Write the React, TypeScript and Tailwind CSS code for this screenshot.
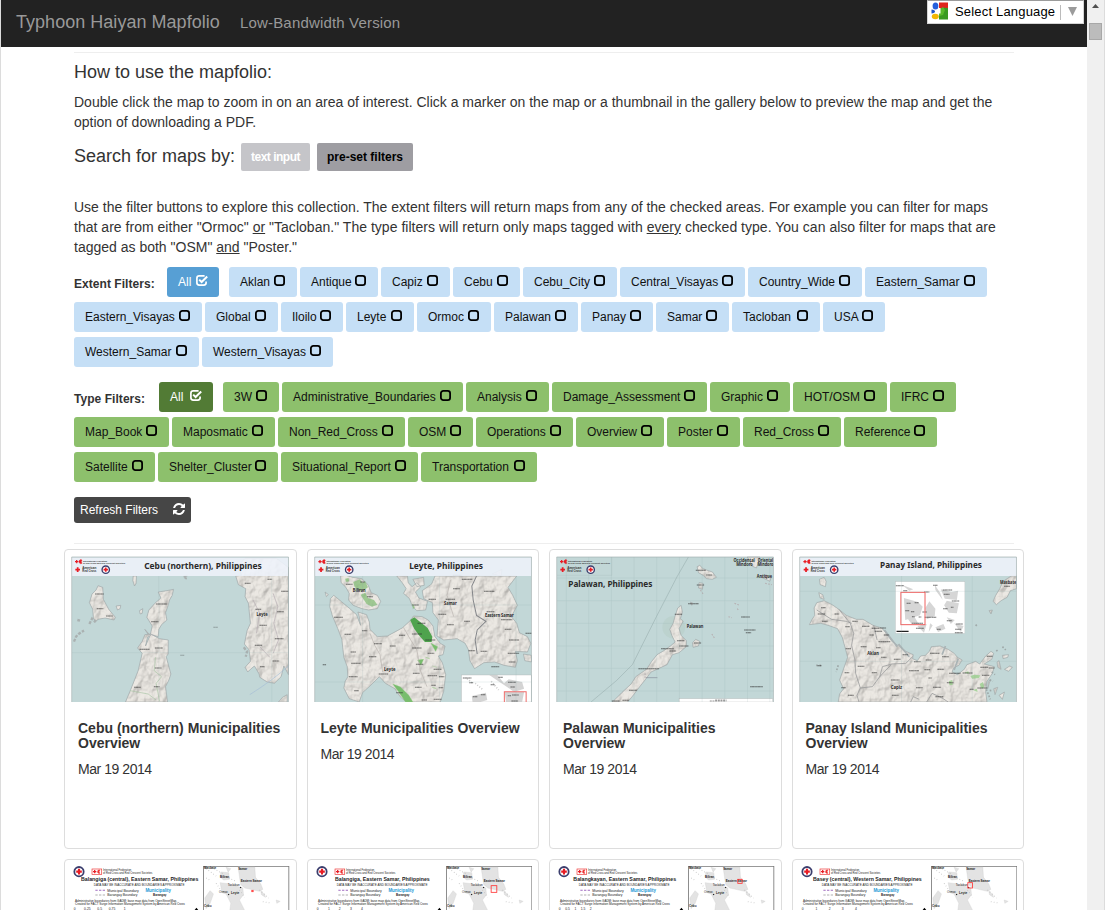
import React from 'react';

type Filter = { name: string; w: string };

const extentRows: Filter[][] = [
  [
    { name: 'Aklan', w: 'w-[68px]' },
    { name: 'Antique', w: 'w-[78px]' },
    { name: 'Capiz', w: 'w-[69px]' },
    { name: 'Cebu', w: 'w-[67px]' },
    { name: 'Cebu_City', w: 'w-[94px]' },
    { name: 'Central_Visayas', w: 'w-[125px]' },
    { name: 'Country_Wide', w: 'w-[114px]' },
    { name: 'Eastern_Samar', w: 'w-[122px]' },
  ],
  [
    { name: 'Eastern_Visayas', w: 'w-[128px]' },
    { name: 'Global', w: 'w-[73px]' },
    { name: 'Iloilo', w: 'w-[62px]' },
    { name: 'Leyte', w: 'w-[68px]' },
    { name: 'Ormoc', w: 'w-[74px]' },
    { name: 'Palawan', w: 'w-[84px]' },
    { name: 'Panay', w: 'w-[72px]' },
    { name: 'Samar', w: 'w-[73px]' },
    { name: 'Tacloban', w: 'w-[88px]' },
    { name: 'USA', w: 'w-[62px]' },
  ],
  [
    { name: 'Western_Samar', w: 'w-[125px]' },
    { name: 'Western_Visayas', w: 'w-[131px]' },
  ],
];

const typeRows: Filter[][] = [
  [
    { name: '3W', w: 'w-[56px]' },
    { name: 'Administrative_Boundaries', w: 'w-[181px]' },
    { name: 'Analysis', w: 'w-[83px]' },
    { name: 'Damage_Assessment', w: 'w-[155px]' },
    { name: 'Graphic', w: 'w-[80px]' },
    { name: 'HOT/OSM', w: 'w-[94px]' },
    { name: 'IFRC', w: 'w-[66px]' },
  ],
  [
    { name: 'Map_Book', w: 'w-[95px]' },
    { name: 'Maposmatic', w: 'w-[103px]' },
    { name: 'Non_Red_Cross', w: 'w-[127px]' },
    { name: 'OSM', w: 'w-[65px]' },
    { name: 'Operations', w: 'w-[97px]' },
    { name: 'Overview', w: 'w-[88px]' },
    { name: 'Poster', w: 'w-[73px]' },
    { name: 'Red_Cross', w: 'w-[98px]' },
    { name: 'Reference', w: 'w-[93px]' },
  ],
  [
    { name: 'Satellite', w: 'w-[81px]' },
    { name: 'Shelter_Cluster', w: 'w-[120px]' },
    { name: 'Situational_Report', w: 'w-[137px]' },
    { name: 'Transportation', w: 'w-[116px]' },
  ],
];

function BoxIcon() {
  return (
    <svg className="-mt-[3px] h-[11px] w-[11px] shrink-0" viewBox="0 0 11 11">
      <rect x="0.900" y="0.900" width="9.200" height="9.200" rx="2.400" fill="none" stroke="#000" strokeWidth="1.800" />
    </svg>
  );
}

function CheckIcon() {
  return (
    <svg className="-mt-[3px] h-[11px] w-[12px] shrink-0" viewBox="0 0 12 11" fill="none" stroke="#fff">
      <path d="M8.600 .9H3.200Q.9 .9 .9 3.200v4.600Q.9 10.100 3.200 10.100h4.600Q10.100 10.100 10.100 7.800V6.600" strokeWidth="1.700" />
      <path d="M3.200 4.600 5.600 7 11.200 1.500" strokeWidth="2" />
    </svg>
  );
}

function RefreshIcon() {
  return (
    <svg className="-mt-[3px] h-[12px] w-[12px]" viewBox="0 0 1536 1536" fill="#fff">
      <path d="M1511 928q0 5-1 7-64 268-268 434.500t-478 166.500q-146 0-282.500-55t-243.500-157l-129 129q-19 19-45 19t-45-19-19-45v-448q0-26 19-45t45-19h448q26 0 45 19t19 45-19 45l-137 137q71 66 161 102t187 36q134 0 250-65t186-179q11-17 53-117 8-23 30-23h192q13 0 22.500 9.500t9.500 22.500zm25-800v448q0 26-19 45t-45 19h-448q-26 0-45-19t-19-45 19-45l138-138q-148-137-349-137-134 0-250 65t-186 179q-11 17-53 117-8 23-30 23h-199q-13 0-22.500-9.500t-9.500-22.500v-7q65-268 270-434.500t480-166.500q146 0 284 55.500t245 156.500l130-129q19-19 45-19t45 19 19 45z" />
    </svg>
  );
}

function FilterButton({ f, tone }: { f: Filter; tone: string }) {
  return (
    <button className={`flex h-[30px] items-center justify-between rounded-[3px] pl-[11px] pr-[12px] text-[12px] text-[#111] ${f.w} ${tone}`}>
      <span className="whitespace-nowrap">{f.name}</span>
      <BoxIcon />
    </button>
  );
}

function FilterGroup({ label, labelW, all, tone, rows }: { label: string; labelW: string; all: string; tone: string; rows: Filter[][] }) {
  return (
    <div className="flex flex-col gap-[5px]">
      {rows.map((row, i) => (
        <div key={i} className="flex items-center gap-[3px]">
          {i === 0 && (
            <>
              <span className={`mt-[4px] whitespace-nowrap text-[12px] font-bold tracking-[0.05px] ${labelW}`}>{label}</span>
              <button className={`mr-[7px] flex h-[30px] items-center justify-between rounded-[3px] px-[11px] text-[12px] text-white ${all}`}>
                <span>All</span>
                <CheckIcon />
              </button>
            </>
          )}
          {row.map((f) => (
            <FilterButton key={f.name} f={f} tone={tone} />
          ))}
        </div>
      ))}
    </div>
  );
}

/* ---------- map thumbnails ---------- */

function Defs({ id }: { id: string }) {
  return (
    <defs>
      <filter id={`${id}-relief`} x="0" y="0" width="100%" height="100%">
        <feTurbulence type="fractalNoise" baseFrequency="0.035 0.028" numOctaves="4" seed="7" result="n" />
        <feDiffuseLighting in="n" surfaceScale="14" lightingColor="#fff" result="l">
          <feDistantLight azimuth="225" elevation="56" />
        </feDiffuseLighting>
        <feComposite in="l" in2="SourceGraphic" operator="arithmetic" k1="0.5" k2="0" k3="0.6" k4="0" result="m" />
        <feComposite in="m" in2="SourceGraphic" operator="in" />
      </filter>
    </defs>
  );
}

function Land({ id, d }: { id: string; d: string }) {
  return (
    <>
      <path d={d} fill="#e2dfda" filter={`url(#${id}-relief)`} />
      <path d={d} fill="none" stroke="#a3a9aa" strokeWidth="2" />
    </>
  );
}

function Marks({ pts }: { pts: number[][] }) {
  return (
    <g stroke="#303030" strokeWidth="3.200" strokeDasharray="5 .6 7 .6 4 .6" opacity=".68">
      {pts.map(([x, y, w], i) => (
        <path key={i} d={`M${x - w / 2} ${y}h${w}`} />
      ))}
    </g>
  );
}

function Label({ x, y, s, w, children }: { x: number; y: number; s: number; w?: number; children: React.ReactNode }) {
  return (
    <text x={x} y={y} fontSize={s} fontWeight="bold" textAnchor="middle" textLength={w} lengthAdjust="spacingAndGlyphs" fill="#2a2a2a" fontFamily="Noto Sans, sans-serif">
      {children}
    </text>
  );
}

function Cross({ x, y, r }: { x: number; y: number; r: number }) {
  return <path d={`M${x - r} ${y}h${2 * r}M${x} ${y - r}v${2 * r}`} stroke="#e81c24" strokeWidth={r * 0.75} />;
}

function Emblem({ x, y, r }: { x: number; y: number; r: number }) {
  return (
    <>
      <circle cx={x} cy={y} r={r} fill="#fff" stroke="#3c3f6e" strokeWidth={r * 0.38} />
      <Cross x={x} y={y} r={r * 0.6} />
    </>
  );
}

function Logos({ x }: { x: number }) {
  return (
    <g transform={`translate(${x} 0)`} fontFamily="Liberation Sans, sans-serif" fill="#333">
      <Cross x={17} y={65} r={5} />
      <path d="M33 60a6 6 0 1 0 0 10a8 8 0 0 1 0-10" fill="#e81c24" stroke="#e81c24" />
      <text x="36" y="65" fontSize="7" fontWeight="bold" textLength="72" lengthAdjust="spacingAndGlyphs">International Federation</text>
      <text x="36" y="72" fontSize="7" fontWeight="bold" textLength="126" lengthAdjust="spacingAndGlyphs">of Red Cross and Red Crescent Societies</text>
      <Cross x={20} y={89} r={7} />
      <text x="34" y="88" fontSize="8" fontWeight="bold" textLength="42" lengthAdjust="spacingAndGlyphs">American</text>
      <text x="34" y="95" fontSize="8" fontWeight="bold" textLength="42" lengthAdjust="spacingAndGlyphs">Red Cross</text>
      <Emblem x={104} y={89} r={11} />
    </g>
  );
}

function Frame({ x, w, grid, children }: { x: number; w: number; grid: React.ReactNode; children: React.ReactNode }) {
  return (
    <svg className="h-[146px] w-full" viewBox={`${x} 48 ${w} 438`} preserveAspectRatio="none">
      <rect x={x} y="48" width={w} height="438" fill="#fff" />
      <rect x={x + 3} y="51" width={w - 7} height="435" fill="#c2d7d7" />
      {children}
      {grid}
      <path d={`M${x + 2} 486V51H${x + w - 3}V486`} fill="none" stroke="#a2b0b0" strokeWidth="2" />
    </svg>
  );
}

function Banner({ x, w }: { x: number; w: number }) {
  return <rect x={x + 3} y="52" width={w - 7} height="56" fill="#eef3fa" opacity=".88" />;
}

function CebuMap() {
  return (
    <Frame x={35} w={654} grid={<path d="M298 108V486M636 108V486M38 338H686" stroke="#8eabab" strokeWidth="1" opacity=".45" />}>
      <Defs id="cebu" />
      <Land id="cebu" d="M116 137L130 142 132 178 148 208 168 232 164 240 137 234 116 238 108 246 102 234 100 208 90 188 98 162 110 150ZM221 108H231L230 130 225 138 220 122ZM296 156L322 152 342 148 338 166 330 180 324 202 318 218 322 240 306 254 298 268 296 290 276 284 264 292 258 318 270 290 256 268 272 286 278 258 262 232 268 210 286 190 304 174ZM256 284L274 282 300 296 326 300 326 342 320 350 334 402 328 420 318 440 324 486H198L214 448 236 392 248 340 234 324 248 304ZM528 108L545 106 538 74 556 55H650L686 82V404L672 378 664 410 644 430 622 426 600 412 598 402 584 378 572 388 564 396 556 382 572 364 568 330 554 312 562 272 572 250 566 190 556 170 558 146 536 134ZM656 486L668 472 682 464V486ZM170 198L184 196 182 206 174 210ZM240 212L250 206 248 220 242 222Z" />
      <path d="M44 305L50 290 58 282 66 276 74 272M90 252L98 236 106 244 110 236M54 240L62 242M552 322L562 334 558 350M372 110L380 108 378 118" fill="none" stroke="#aab1b1" strokeWidth="7" strokeDasharray="9 4" />
      <path d="M288 352L284 392 306 410 290 430 300 484M212 452L266 462 290 480" stroke="#abc5a6" fill="none" strokeWidth="2" />
      <path d="M570 464Q640 420 688 376" stroke="#a6bed6" fill="none" strokeWidth="2" />
      <path d="M640 160L654 200 642 250 656 300 640 340M580 180L600 220 590 280M600 320L630 352" stroke="#b6aeb4" fill="none" strokeWidth="2" />
      <Marks pts={[[120, 162, 26], [122, 206, 20], [150, 228, 20], [306, 192, 34], [286, 245, 22], [255, 328, 30], [298, 324, 24], [296, 384, 20], [234, 442, 20], [292, 440, 18], [564, 130, 18], [630, 118, 14], [596, 208, 18], [662, 215, 20], [610, 256, 22], [658, 296, 26], [596, 316, 22], [648, 363, 20], [608, 380, 14], [675, 154, 22]]} />
      <g opacity=".5">
        <Marks pts={[[468, 262, 14], [368, 346, 12]]} />
      </g>
      <Label x={607} y={229} s={14} w={34}>Leyte</Label>
      <Banner x={35} w={654} />
      <Logos x={35} />
      <Label x={430} y={86} s={24} w={352}>Cebu (northern), Philippines</Label>
    </Frame>
  );
}

function LeyteMap() {
  return (
    <Frame x={43} w={652} grid={<path d="M188 108V486M418 108V486M646 108V486M46 195H692M46 426H692" stroke="#8eabab" opacity=".5" />}>
      <Defs id="leyte" />
      <Land id="leyte" d="M122 108L138 106 158 112 186 116 204 134 214 158 232 166 242 184 232 206 206 210 186 206 160 196 146 180 148 160 138 142 124 128ZM92 176L102 166 124 184 150 206 170 224 182 256 178 230 174 216 200 224 208 246 210 268 232 290 262 288 284 276 306 264 330 242 340 228 366 230 384 240 398 258 404 290 420 310 434 318 428 344 414 348 426 368 436 404 430 454 420 486H318L300 470 284 446 256 430 238 410 210 438 188 458 178 486 148 476 132 444 136 424 144 410 142 380 132 352 126 298 114 266 98 228 90 200ZM290 108L322 108 324 128 336 140 350 128 362 140 346 156 356 174 382 184 376 210 350 212 336 198 328 176 310 160 318 146 306 128ZM404 108H648L622 142 636 166 650 196 632 230 648 250 656 278 680 290 690 310 680 336 644 334 650 362 644 382 610 376 582 366 550 368 522 386 508 362 504 330 494 310 470 296 430 300 410 288 414 240 398 218 396 188 370 176 366 152 394 132ZM574 102L604 88 602 108ZM668 342L692 346V366L672 362ZM338 118L370 112 372 136 350 140ZM76 156L86 164 80 170Z" />
      <path d="M160 126L180 118 188 128 196 124 204 142 190 152 176 152 164 140ZM182 164L196 158 204 174 222 180 232 194 216 200 200 192ZM136 116L146 114 148 124 138 126ZM336 190L344 202 338 208Z" fill="#86bd78" opacity=".75" />
      <path d="M330 240L342 232 360 246 382 264 396 290 394 306 374 306 358 288 342 266Z" fill="#4fa34d" />
      <path d="M392 310L412 320 406 334ZM278 432L300 440 326 466 338 486H316L296 456ZM352 360L370 358 362 376ZM376 352L388 356ZM396 442L408 446ZM396 378l14 4" fill="#79bd6e" stroke="#8fc97f" />
      <path d="M528 108L514 138 518 180 528 226 556 244 530 270 524 300 530 342" fill="none" stroke="#84868a" strokeWidth="3" />
      <path d="M210 280L224 316 240 344 248 396M310 262L328 294 350 330 360 390 380 440M450 120L440 166 460 230" stroke="#b9b3ae" fill="none" strokeWidth="2" />
      <Marks pts={[[148, 133, 20], [210, 170, 18], [188, 126, 14], [116, 232, 26], [144, 283, 20], [160, 336, 16], [168, 370, 28], [160, 410, 26], [218, 350, 22], [194, 272, 16], [234, 311, 24], [278, 318, 18], [306, 286, 18], [350, 282, 30], [350, 324, 28], [390, 300, 30], [364, 250, 24], [358, 373, 22], [412, 388, 24], [348, 400, 20], [396, 407, 28], [424, 410, 16], [400, 436, 14], [422, 443, 14], [354, 442, 20], [298, 458, 20], [170, 452, 14], [392, 340, 20], [372, 480, 16], [412, 478, 24], [470, 106, 26], [500, 118, 32], [468, 146, 20], [450, 178, 28], [396, 178, 22], [426, 223, 24], [450, 254, 20], [566, 154, 32], [570, 215, 24], [618, 239, 34], [500, 244, 18], [622, 268, 20], [640, 300, 30], [514, 332, 20], [550, 334, 20], [638, 340, 34], [634, 366, 20], [584, 380, 24], [684, 280, 20], [346, 195, 20], [250, 402, 28], [74, 374, 10]]} />
      <Label x={178} y={156} s={14} w={38}>Biliran</Label>
      <Label x={450} y={195} s={14} w={38}>Samar</Label>
      <Label x={596} y={230} s={14} w={86}>Eastern Samar</Label>
      <Label x={269} y={393} s={14} w={34}>Leyte</Label>
      <rect x="483" y="405" width="208" height="81" fill="#fff" stroke="#aaa" />
      <path d="M514 468L556 458 560 480 540 486H516ZM566 405H590L610 430 624 418 664 426 670 446 640 456 618 440 600 428ZM612 456H670L664 486H616Z" fill="#c9c9c9" opacity=".8" />
      <path d="M524 430L546 448M572 424L594 450M500 416L516 430" stroke="#ccc" strokeWidth="5" strokeDasharray="3 5" />
      <Marks pts={[[500, 414, 26], [512, 428, 12], [576, 434, 12], [634, 427, 24], [636, 441, 14], [600, 412, 14], [548, 464, 14], [524, 470, 14], [644, 465, 20], [626, 467, 10], [642, 483, 20]]} />
      <path d="M611 486V455H676V486" fill="none" stroke="#ee6a68" strokeWidth="3" />
      <Banner x={43} w={652} />
      <Logos x={44} />
      <Label x={437} y={87} s={24} w={220}>Leyte, Philippines</Label>
    </Frame>
  );
}

function PalawanMap() {
  return (
    <Frame x={39} w={655} grid={<path d="M70 51V486M137 51V486M205 51V486M273 51V486M341 51V486M409 51V486M477 51V486M545 51V486M613 51V486M680 51V486M42 114H692M42 182H692M42 250H692M42 318H692M42 385H692M42 453H692" stroke="#8faaaa" opacity=".48" />}>
      <Defs id="pal" />
      <circle cx="392" cy="262" r="34" fill="#b7cfc8" opacity=".6" />
      <path d="M42 106H206V51" fill="none" stroke="#a9bdbd" />
      <Land id="pal" d="M208 486L236 458 264 432 278 410 310 388 326 364 342 344 362 332 382 318 396 306 386 286 380 268 390 250 396 228 404 204 414 196 418 216 412 236 420 244 408 266 414 286 430 302 430 320 408 338 388 344 372 374 346 386 324 396 306 420 290 440 272 464 254 486ZM462 80L470 76 480 86 490 90 508 96 520 112 508 118 490 116 480 106 466 98ZM468 128L480 130 478 148 466 144ZM448 308L458 298 470 304 466 318 450 322ZM442 186L450 190 446 196ZM612 51H650L640 84 626 78 620 62ZM654 112L668 104 684 112 680 124 668 118Z" />
      <path d="M436 51L402 110 340 230 268 374 220 422 144 486" fill="none" stroke="#93a8a8" strokeWidth="1.500" />
      <path d="M574 190L590 196M582 206l6 6M506 282l8 12M556 230l10 3M666 130l20 4M472 150l8 12M306 400v18" stroke="#b5aeb0" strokeWidth="3" strokeDasharray="5 4" />
      <Marks pts={[[473, 91, 30], [498, 105, 18], [472, 135, 22], [451, 191, 32], [406, 223, 22], [413, 302, 22], [373, 326, 38], [389, 333, 20], [422, 318, 28], [463, 309, 22], [317, 386, 62], [270, 451, 24], [218, 483, 24], [248, 481, 20], [607, 231, 26], [620, 270, 34], [616, 278, 16], [640, 440, 38]]} />
      <path d="M309 413h34" stroke="#778" strokeWidth="1.500" />
      <Label x={456} y={265} s={13} w={50}>Palawan</Label>
      <Label x={603} y={66} s={13} w={64}>Occidental</Label>
      <Label x={604} y={79} s={13} w={50}>Mindoro</Label>
      <Label x={667} y={66} s={13} w={46}>Oriental</Label>
      <Label x={667} y={79} s={13} w={48}>Mindoro</Label>
      <Label x={664} y={114} s={13} w={46}>Antique</Label>
      <rect x="408" y="476" width="281" height="10" fill="#fff" stroke="#aaa" />
      <path d="M500 483h50M516 480h34" stroke="#999" strokeWidth="3" strokeDasharray="6 2" />
      <Logos x={39} />
      <Label x={202} y={140} s={24} w={252}>Palawan, Philippines</Label>
    </Frame>
  );
}

function PanayMap() {
  return (
    <Frame x={43} w={652} grid={<path d="M139 108V486M349 108V486M560 108V486M46 154H692M46 364H692" stroke="#8eabab" opacity=".5" />}>
      <Defs id="panay" />
      <Land id="panay" d="M74 254L82 238 90 226 88 204 96 188 118 182 142 194 162 208 184 226 214 238 234 238 264 256 290 264 308 286 320 304 344 320 362 334 384 344 382 356 396 362 406 348 420 346 432 334 438 320 464 318 488 328 506 340 516 352 530 360 520 376 504 384 500 396 516 404 536 388 544 374 570 364 582 372 600 348 616 334 624 340 618 358 596 372 626 380 620 400 604 424 600 456 604 486H160L164 462 176 446 164 420 174 392 188 352 182 328 172 292 158 266 130 256 108 250ZM104 118L118 112 124 124 122 140 106 134ZM102 158L114 164 118 178 106 174ZM642 146L652 124 676 108H692V146L674 152 664 172 646 182 632 194 622 184 630 166ZM610 212L620 210 616 222ZM650 346L668 344 666 352 652 356ZM656 388L672 378 680 382 668 394ZM634 366L640 362 646 388 636 382ZM624 446L636 442 628 464ZM640 466L656 456 650 478ZM608 424L614 418 606 446Z" />
      <path d="M618 396L628 404M612 420L622 424M612 452L622 450M650 320L660 330M632 330l6 8M602 448l12 30M570 254l4 4M160 376l-6 20M94 376h20" stroke="#9fa9a9" strokeWidth="5" strokeDasharray="5 5" />
      <path d="M470 344L480 318M518 356L506 390M340 312L372 350M298 270L336 320" stroke="#aab3b5" fill="none" strokeWidth="5" />
      <path d="M554 408L566 404 584 406 580 414 560 416ZM582 432L592 426 596 442 588 446ZM562 450L574 446 576 456ZM490 424L500 420 502 434 492 436ZM536 398L548 394 552 402Z" fill="#9bcf8f" opacity=".8" />
      <path d="M162 208L196 250 206 280 200 316 210 360 212 400 226 444 262 440 284 410 292 380 320 372 362 370 382 350M226 444L216 466 222 486M318 374L284 410M376 486L384 470 402 478M424 486L440 460 470 474 488 486M96 210L140 238 184 244 200 250M266 256L276 300" fill="none" stroke="#949698" strokeWidth="2.200" />
      <Marks pts={[[116, 203, 14], [110, 222, 22], [120, 244, 16], [156, 222, 14], [188, 260, 14], [210, 244, 16], [242, 259, 22], [190, 326, 16], [236, 320, 18], [228, 379, 20], [186, 398, 14], [176, 443, 14], [198, 466, 18], [272, 265, 24], [294, 264, 18], [280, 274, 22], [304, 285, 16], [260, 285, 14], [298, 305, 36], [280, 323, 14], [296, 352, 16], [360, 344, 16], [336, 358, 20], [268, 398, 16], [396, 365, 20], [430, 360, 18], [448, 340, 28], [480, 350, 20], [386, 392, 30], [330, 420, 26], [426, 389, 18], [466, 388, 20], [402, 443, 20], [508, 400, 34], [455, 442, 24], [494, 428, 20], [546, 399, 30], [596, 382, 24], [600, 406, 22], [590, 444, 30], [558, 448, 12], [330, 466, 20], [462, 470, 24], [618, 384, 18], [612, 349, 18], [434, 414, 10], [104, 377, 12], [664, 139, 18]]} />
      <Label x={264} y={345} s={14} w={34}>Aklan</Label>
      <Label x={334} y={446} s={14} w={34}>Capiz</Label>
      <rect x="331" y="125" width="207" height="155" fill="#fff" stroke="#bbb" />
      <path d="M356 174L398 186 412 200 404 226 360 240ZM360 226L384 224 400 252 376 248ZM420 204L432 184 450 206 448 228 424 238ZM466 148L498 156 518 152 514 180 478 176ZM484 182L520 190 514 220 490 218 476 196ZM448 134L464 158 472 180 450 150ZM396 258L424 252 416 278ZM434 250L442 256 430 276ZM450 262L474 252 480 266 458 276ZM484 232L508 240 496 252ZM506 250L534 258 526 276ZM350 134L384 148 372 152Z" fill="#d6d6d6" />
      <Marks pts={[[344, 137, 24], [360, 152, 12], [450, 136, 14], [486, 150, 28], [484, 163, 18], [510, 183, 22], [424, 156, 16], [370, 190, 12], [394, 188, 12], [366, 212, 12], [382, 215, 10], [384, 230, 8], [404, 231, 8], [396, 250, 34], [404, 265, 24], [446, 232, 14], [480, 206, 14], [492, 242, 16], [522, 252, 20], [518, 268, 18], [520, 278, 24], [460, 268, 12], [418, 216, 14], [428, 232, 20], [500, 202, 8]]} />
      <path d="M334 274h36" stroke="#222" strokeWidth="4" />
      <rect x="347" y="157" width="72" height="97" fill="none" stroke="#ee6361" strokeWidth="3" />
      <Label x={667} y={132} s={13} w={49}>Masbate</Label>
      <Banner x={43} w={652} />
      <Logos x={44} />
      <Label x={437} y={85} s={24} w={304}>Panay Island, Philippines</Label>
    </Frame>
  );
}

type Sheet = { title: string; tx: number; tw: number; box: [number, number, number, number]; ticks: [number, string][] };

const sheets: Sheet[] = [
  { title: 'Balangiga (central), Eastern Samar, Philippines', tx: 65, tw: 352, box: [577, 121, 4, 4], ticks: [[46, '0'], [84, '0.25'], [121, '0.5'], [158, '0.75'], [196, '1']] },
  { title: 'Balangiga, Eastern Samar, Philippines', tx: 98, tw: 284, box: [566, 107, 17, 20], ticks: [[46, '0'], [80, '1'], [112, '2'], [146, '3'], [179, '4']] },
  { title: 'Balangkayan, Eastern Samar, Philippines', tx: 87, tw: 308, box: [580, 88, 13, 12], ticks: [[46, '0'], [70, '0.5'], [93, '1'], [116, '1.5'], [139, '2']] },
  { title: 'Basey (central), Western Samar, Philippines', tx: 77, tw: 326, box: [541, 98, 14, 16], ticks: [[46, '0'], [87, '1'], [127, '2'], [166, '3'], [206, '4']] },
];

function SheetText({ x, y, s, w, bold, fill, children }: { x: number; y: number; s: number; w: number; bold?: boolean; fill?: string; children: React.ReactNode }) {
  return (
    <text x={x} y={y} fontSize={s} fontWeight={bold ? 'bold' : 'normal'} fill={fill} textLength={w} lengthAdjust="spacingAndGlyphs">
      {children}
    </text>
  );
}

function SheetThumb({ s }: { s: Sheet }) {
  return (
    <svg className="h-[146px] w-full" viewBox="35 48 655 438" preserveAspectRatio="none" fontFamily="Liberation Sans, sans-serif" fill="#222">
      <Emblem x={59} y={65} r={14} />
      <rect x="98" y="57" width="29" height="16" fill="#fff" stroke="#e33" strokeWidth="2" />
      <Cross x={106} y={65} r={5} />
      <path d="M122 60a5.500 5.500 0 1 0 0 10a7 7 0 0 1 0-10" fill="#e33" stroke="#e33" />
      <SheetText x={131} y={64} s={8.500} w={85}>International Federation</SheetText>
      <SheetText x={131} y={73} s={8.500} w={148}>of Red Cross and Red Crescent Societies</SheetText>
      <SheetText x={s.tx} y={94} s={16} w={s.tw} bold>{s.title}</SheetText>
      <SheetText x={103} y={108} s={9.500} w={272}>DATA MAY BE INACCURATE AND BOUNDARIES APPROXIMATE</SheetText>
      <path d="M108 121h29" stroke="#a06cc0" strokeWidth="3" strokeDasharray="7 4" />
      <path d="M108 135h29" stroke="#888" strokeWidth="2" strokeDasharray="7 4" />
      <SheetText x={144} y={125} s={11} w={94}>Municipal Boundary</SheetText>
      <SheetText x={144} y={138} s={11} w={90}>Barangay Boundary</SheetText>
      <SheetText x={258} y={126} s={14} w={77} bold fill="#1c9ad6">Municipality</SheetText>
      <SheetText x={281} y={137} s={9.500} w={40} bold>Barangay</SheetText>
      <SheetText x={47} y={155} s={10} w={306}>Administrative boundaries from GADM; base map data from OpenStreetMap.</SheetText>
      <SheetText x={47} y={166} s={10} w={329}>Created for FACT Surge Information Management System by American Red Cross</SheetText>
      {s.ticks.map(([x, t]) => (
        <text key={t} x={x} y="180" fontSize="10" textAnchor="middle">{t}</text>
      ))}
      <path d="M404 182L411 173 418 182Z" fill="#000" />
      <rect x="432" y="49" width="256" height="300" fill="#fff" stroke="#777" strokeWidth="2.500" />
      <path d="M536 51H586L588 82 604 102 610 118 600 124 574 118 556 114 544 104 540 80ZM484 66L508 68 510 88 492 90 482 80ZM482 98L512 102 530 108 550 114 552 134 540 150 560 190H510L514 160 500 132 488 128ZM436 144L452 122 462 132 452 160 440 176ZM434 52H444L440 56ZM604 122L616 134 618 142 606 134ZM650 150L662 154 652 160ZM500 52L514 56 506 66Z" fill="#e3e3e3" stroke="#ccc" />
      <path d="M440 56L470 78M456 52L492 72M500 80L530 94M540 120L556 142M600 120L628 144M610 155l22 4M470 100l14 20M440 84l10 6" stroke="#bbb" strokeWidth="3" strokeDasharray="2 7" fill="none" />
      <SheetText x={434} y={58} s={9} w={36} bold>Masbate</SheetText>
      <SheetText x={536} y={61} s={9} w={27} bold>Samar</SheetText>
      <SheetText x={482} y={85} s={9} w={27} bold>Biliran</SheetText>
      <SheetText x={544} y={96} s={9} w={63} bold>Eastern Samar</SheetText>
      <SheetText x={515} y={133} s={9} w={24} bold>Leyte</SheetText>
      <SheetText x={434} y={171} s={9} w={22} bold>Cebu</SheetText>
      <SheetText x={505} y={107} s={8} w={36}>Tacloban</SheetText>
      <SheetText x={479} y={129} s={8} w={27}>Ormoc</SheetText>
      <path d="M542 111l3 3M506 132l3 3" stroke="#000" strokeWidth="3" />
      <rect x={s.box[0]} y={s.box[1]} width={s.box[2]} height={s.box[3]} fill="none" stroke="#f33" strokeWidth="2.500" />
    </svg>
  );
}

const cards = [
  { title: 'Cebu (northern) Municipalities Overview', map: <CebuMap /> },
  { title: 'Leyte Municipalities Overview', map: <LeyteMap /> },
  { title: 'Palawan Municipalities Overview', map: <PalawanMap /> },
  { title: 'Panay Island Municipalities Overview', map: <PanayMap /> },
];

function Card({ children }: { children: React.ReactNode }) {
  return <article className="h-[300px] overflow-hidden rounded-[4px] border border-[#ddd] bg-white px-[6px] pt-[6px]">{children}</article>;
}

function LanguagePicker() {
  return (
    <div className="mr-[3px] flex h-6 w-[157px] items-center border border-[#d5d5d5] border-t-[#9b9b9b] bg-white pl-[3px] text-[13px] text-black">
      <svg className="-mt-[2px] h-[18px] w-[17px]" viewBox="0 0 17 18">
        <rect x="8" y="0.500" width="9" height="6.500" fill="#e0251c" />
        <path d="M8 7q4-2 9-1v11.500H8z" fill="#3a9a22" />
        <path d="M8 8l4-3 2 3-2 5-4 1z" fill="#59b92c" />
        <path d="M6.500 6h3v5.500h-3z" fill="#fff" />
        <ellipse cx="4.500" cy="4" rx="2.900" ry="3.500" fill="#245edb" />
        <path d="M.5 7.500Q4 8 4 9.500T.5 11.500z" fill="#1f55c8" />
        <ellipse cx="4.300" cy="14.500" rx="3.500" ry="2.800" fill="#f2b705" />
      </svg>
      <span className="-mt-px ml-[7px] w-[101px] whitespace-nowrap tracking-[0.18px]">Select Language</span>
      <span className="ml-[4px] h-[15px] w-px bg-[#bbb]" />
      <svg className="-mt-px ml-[7px] h-[9px] w-[9px]" viewBox="0 0 9 9">
        <path d="M0 0h9L4.500 9z" fill="#9b9b9b" />
      </svg>
    </div>
  );
}

export default function App() {
  return (
    <div className="flex h-[910px] w-[1105px] overflow-hidden bg-white text-[14px] leading-5 text-[#333]" style={{ fontFamily: '"Liberation Sans", Arial, sans-serif' }}>
      <div className="w-[1087px] shrink-0 border-l border-[#dcdcdc]">
        <nav className="flex h-[47px] items-start bg-[#222] text-[#999]">
          <span className="ml-[15px] mt-[12px] w-[204px] whitespace-nowrap text-[18px] tracking-[0.03px]">Typhoon Haiyan Mapfolio</span>
          <span className="ml-[20px] mt-[13px] flex-1 text-[15px] tracking-[0.17px]">Low-Bandwidth Version</span>
          <LanguagePicker />
        </nav>
        <main className="ml-[73px] w-[940px]">
          <hr className="mt-[5px] border-[#eee]" />
          <h4 className="mt-[9px] text-[18px]">How to use the mapfolio:</h4>
          <p className="mt-[10px]">
            Double click the map to zoom in on an area of interest. Click a marker on the map or a thumbnail in the gallery below to preview the map and get the
            <br />
            option of downloading a PDF.
          </p>
          <div className="mt-[11px] flex h-[28px] items-center">
            <h4 className="-mt-[3px] w-[167px] whitespace-nowrap text-[18px]">Search for maps by:</h4>
            <button className="h-[28px] w-[69px] rounded-[2px] bg-[#c5c5c9] text-[12px] font-bold tracking-[-0.5px] text-white">text input</button>
            <button className="ml-[7px] h-[28px] w-[96px] rounded-[2px] bg-[#9e9da2] text-[12px] font-bold text-black">pre-set filters</button>
          </div>
          <p className="mb-[10px] mt-[26px] whitespace-nowrap">
            Use the filter buttons to explore this collection. The extent filters will return maps from any of the checked areas. For example you can filter for maps
            <br />
            <span className="tracking-[0.022px]">
              that are from either "Ormoc" <u>or</u> "Tacloban." The type filters will return only maps tagged with <u>every</u> checked type. You can also filter for maps that are
            </span>
            <br />
            tagged as both "OSM" <u>and</u> "Poster."
          </p>
          <FilterGroup label="Extent Filters:" labelW="w-[90px]" all="w-[52px] bg-[#579fd4]" tone="bg-[#c5dff6]" rows={extentRows} />
          <div className="h-[15px]" />
          <FilterGroup label="Type Filters:" labelW="w-[82px]" all="w-[54px] bg-[#527b35]" tone="bg-[#8dc06c]" rows={typeRows} />
          <button className="mt-[15px] flex h-[26px] w-[117px] items-center justify-between rounded-[3px] bg-[#464646] px-[6px] text-[12px] text-white">
            <span>Refresh Filters</span>
            <RefreshIcon />
          </button>
          <hr className="mt-[20px] border-[#eee]" />
          <section className="-ml-[10px] mt-[5px] grid w-[960px] grid-cols-4 gap-[10px]">
            {cards.map((c) => (
              <Card key={c.title}>
                {c.map}
                <h5 className="mt-[19px] pl-[7px] text-[14px] font-bold leading-[15px]">{c.title}</h5>
                <p className="mt-[8px] pl-[7px] tracking-[-0.45px]">Mar 19 2014</p>
              </Card>
            ))}
            {sheets.map((s) => (
              <Card key={s.title}>
                <SheetThumb s={s} />
              </Card>
            ))}
          </section>
        </main>
      </div>
      <aside className="flex w-[18px] flex-col items-center border-r border-[#dcdcdc] bg-[#f0f0f0]">
        <svg className="mt-[4px] h-[4px] w-[7px]" viewBox="0 0 7 4">
          <path d="M3.500 0L7 4H0z" fill="#505050" />
        </svg>
        <div className="mt-[15px] h-[17px] w-[13px] border border-[#a8a8a8] bg-[#bcbcbc]" />
      </aside>
    </div>
  );
}
